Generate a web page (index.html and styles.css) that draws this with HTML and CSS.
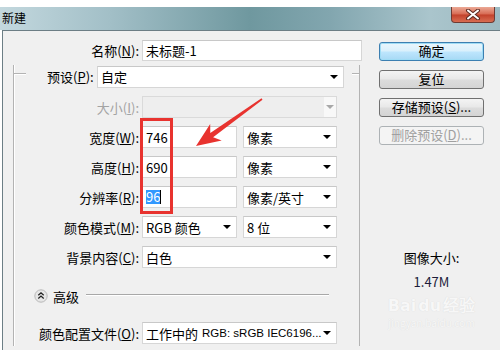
FILE: index.html
```html
<html lang="zh-CN">
<head>
  <meta charset="UTF-8">
  <title>新建</title>
  <link rel="stylesheet" href="styles.css">
</head>
<body>

  <!-- Window -->
  <div class="window">

    <!-- Title bar -->
    <div class="titlebar">
      <span class="title">新建</span>
      <div class="close">
        <svg width="16" height="11" viewBox="0 0 16 11">
          <path d="M3 1.5 L13 9.5 M13 1.5 L3 9.5" stroke="#5a2a22" stroke-width="4" stroke-linecap="round"/>
          <path d="M3 1.5 L13 9.5 M13 1.5 L3 9.5" stroke="#fff" stroke-width="2" stroke-linecap="round"/>
        </svg>
      </div>
    </div>

    <!-- Dialog body -->
    <div class="dialog">

      <div class="form">
        <div class="name-row">
          <label class="label name-label">名称(<u>N</u>):</label>
          <div class="field name-field">未标题-1</div>
        </div>

        <!-- Preset group box -->
        <div class="group">
          <div class="group-head">
            <label class="label preset-label">预设(<u>P</u>):</label>
            <div class="field select preset-select">自定<span class="arrow"></span></div>
          </div>

          <div class="rows">
            <div class="row">
              <label class="label disabled">大小(<u>I</u>):</label>
              <div class="field select wide off"><span class="arrow-box"><span class="arrow"></span></span></div>
            </div>
            <div class="row">
              <label class="label">宽度(<u>W</u>):</label>
              <div class="field half">746</div>
              <div class="field select half">像素<span class="arrow"></span></div>
            </div>
            <div class="row">
              <label class="label">高度(<u>H</u>):</label>
              <div class="field half">690</div>
              <div class="field select half">像素<span class="arrow"></span></div>
            </div>
            <div class="row">
              <label class="label">分辨率(<u>R</u>):</label>
              <div class="field half"><span class="picked">96</span><span class="caret"></span></div>
              <div class="field select half">像素/英寸<span class="arrow"></span></div>
            </div>
            <div class="row">
              <label class="label">颜色模式(<u>M</u>):</label>
              <div class="field select half">RGB 颜色<span class="arrow"></span></div>
              <div class="field select half">8 位<span class="arrow"></span></div>
            </div>
            <div class="row">
              <label class="label">背景内容(<u>C</u>):</label>
              <div class="field select wide">白色<span class="arrow"></span></div>
            </div>

            <div class="advanced">
              <svg class="toggle" width="14" height="14" viewBox="0 0 14 14">
                <circle cx="7" cy="7" r="6.2" fill="#e6e6e6" stroke="#b9b9b9"/>
                <path d="M4.3 6.2 L7 3.8 L9.7 6.2 M4.3 9.4 L7 7 L9.7 9.4" fill="none" stroke="#222" stroke-width="1.3"/>
              </svg>
              <span class="advanced-text">高级</span>
              <span class="rule"></span>
            </div>

            <div class="row profile-row">
              <label class="label">颜色配置文件(<u>O</u>):</label>
              <div class="field select wide">工作中的 <span class="latin">RGB: sRGB IEC6196...</span><span class="arrow"></span></div>
            </div>
          </div>
        </div>
      </div>

      <!-- Buttons and size -->
      <div class="side">
        <div class="button default">确定</div>
        <div class="button">复位</div>
        <div class="button">存储预设(<u>S</u>)...</div>
        <div class="button disabled">删除预设(<u>D</u>)...</div>

        <div class="size-title">图像大小:</div>
        <div class="size-value">1.47M</div>

        <div class="watermark">
          <div class="wm-logo">Bai<span class="wm-du">du</span>经验</div>
          <div class="wm-url">jingyan.baidu.com</div>
        </div>
      </div>

    </div>

    <!-- Red annotation drawn over the screenshot -->
    <svg class="marks" width="500" height="350" viewBox="0 0 500 350">
      <rect x="141.5" y="119.5" width="30" height="93" fill="none" stroke="#e8332f" stroke-width="3"/>
      <polygon points="261.5,98.3 262.5,99.7 213.1,137.2 221.7,140.5 196,146 210.2,124 210.3,133.0" fill="#e8332f"/>
    </svg>

  </div>

</body>
</html>
```

FILE: styles.css
```css
html,
body {
  margin: 0;
  background-color: #fff;
  font-family: "Noto Sans CJK SC", sans-serif;
  font-size: 13px;
  color: #000;
  overflow: hidden;
}

u {
  text-decoration-thickness: 1px;
  text-underline-offset: 1px;
}

.window {
  position: relative;
  width: 500px;
  height: 350px;
  padding-top: 7px;
  box-sizing: border-box;
}

.titlebar {
  display: flex;
  align-items: flex-start;
  justify-content: space-between;
  height: 23px;
  padding-left: 2px;
  background: linear-gradient(90deg, #c3d8de 0%, #a2bfc7 22%, #6f989f 50%, #82a6af 66%, #aac5cc 86%, #9dbac2 100%);
}

.title {
  font-size: 12px;
  line-height: 19px;
  margin-top: 1px;
}

.close {
  display: flex;
  align-items: center;
  justify-content: center;
  width: 44px;
  height: 16px;
  margin-right: 5px;
  box-sizing: border-box;
  border: 1px solid #6e3b33;
  border-top: 0;
  border-radius: 0 0 4px 4px;
  background: linear-gradient(#eba996, #d76a52 48%, #c2412a 52%, #d86d52);
}

.dialog {
  display: flex;
  height: 320px;
  margin-left: 2px;
  border-top: 1px solid #6c7e85;
  border-left: 1px solid #6c7e85;
  background-color: #f0f0f0;
}

.form {
  width: 370px;
}

.label {
  flex: none;
  text-align: right;
  white-space: nowrap;
}

.label.disabled {
  color: #a3a3a3;
}

.field {
  display: flex;
  align-items: center;
  flex: none;
  height: 22px;
  padding: 0 5px 0 3px;
  box-sizing: border-box;
  background-color: #fff;
  border: 1px solid #d6d6d6;
  border-top-color: #c8c8c8;
  white-space: nowrap;
}

.arrow {
  flex: none;
  margin-left: auto;
  width: 0;
  height: 0;
  border-left: 4px solid transparent;
  border-right: 4px solid transparent;
  border-top: 4px solid #000;
}

.latin {
  margin-left: 4px;
  font-family: "Liberation Sans", sans-serif;
  font-size: 11.5px;
}

.name-row {
  display: flex;
  align-items: center;
  gap: 3px;
  margin-top: 9px;
}

.name-label {
  width: 136px;
}

.name-field {
  width: 220px;
  height: 21px;
}

/* Group box */
.group {
  width: 347px;
  margin: 12px 0 0 10px;
  box-sizing: border-box;
  border-left: 1px solid #b3b3b3;
  border-right: 1px solid #b3b3b3;
  box-shadow: inset 1px 0 #fff;
}

.group-head {
  display: flex;
  align-items: center;
  height: 23px;
  margin-top: -8px;
}

.group-head::before,
.group-head::after {
  content: "";
  align-self: flex-start;
  height: 1px;
  margin-top: 8px;
  background-color: #b3b3b3;
  box-shadow: 0 1px #fff;
}

.group-head::before {
  width: 12px;
}

.group-head::after {
  flex: 1;
  margin-left: 8px;
}

.preset-label {
  margin-left: 21px;
  width: 46px;
}

.preset-select {
  width: 247px;
  margin-left: 4px;
}

.rows {
  margin-top: 4px;
}

.row {
  display: flex;
  align-items: center;
  gap: 6px;
  height: 30px;
}

.row .label {
  width: 125px;
  margin-right: -3px;
}

.half {
  width: 95px;
}

.half + .half {
  width: 94px;
}

.wide {
  width: 195px;
}

.select.off {
  padding-right: 0;
  background-color: #eeeeee;
  border-color: #dadada;
}

.arrow-box {
  display: flex;
  align-items: center;
  justify-content: center;
  margin-left: auto;
  width: 12px;
  height: 100%;
  background-color: #f8f8f8;
}

.arrow-box .arrow {
  margin: 0;
  border-top-color: #a8a8a8;
}

.picked {
  background-color: #3399ff;
  color: #fff;
  line-height: 14px;
}

.caret {
  width: 1px;
  height: 14px;
  background-color: #000;
}

.advanced {
  display: flex;
  align-items: center;
  height: 48px;
  padding-left: 20px;
}

.advanced-text {
  margin-left: 5px;
}

.rule {
  flex: none;
  width: 243px;
  height: 1px;
  margin: -4px 0 0 7px;
  background-color: #a8a8a8;
  box-shadow: 0 1px #fff;
}

.profile-row {
  height: 26px;
}

/* Right column */
.side {
  position: relative;
  width: 105px;
  padding: 11px 0 0 6px;
}

.button {
  height: 19px;
  margin-bottom: 9px;
  box-sizing: border-box;
  border: 1px solid #707070;
  border-radius: 3px;
  background: linear-gradient(#f4f4f4, #e8e8e8 48%, #dcdcdc 52%, #d4d4d4);
  text-align: center;
  line-height: 16px;
  white-space: nowrap;
}

.button.default {
  border-color: #3c7fb1;
  box-shadow: inset 0 0 0 1px #9fdcf5;
  background: linear-gradient(#eaf6fd, #d9f0fc 48%, #bee6fd 52%, #a7d9f5);
}

.button.disabled {
  border-color: #adb2b5;
  background: #f4f4f4;
  color: #a0a0a0;
}

.size-title {
  margin-top: 104px;
  text-align: center;
  line-height: 18px;
}

.size-value {
  margin-top: 6px;
  text-align: center;
  line-height: 18px;
  color: #1c1c3a;
}

.watermark {
  margin-top: 5px;
  text-align: center;
  color: #f7f7f7;
  text-shadow: 0 0 1px #d6d6d6;
}

.wm-logo {
  font-family: "DejaVu Sans", sans-serif;
  font-size: 16px;
  font-weight: bold;
  line-height: 19px;
}

.wm-du {
  margin: 0 2px;
}

.wm-url {
  margin-top: 2px;
  font-size: 10px;
  line-height: 12px;
}

.marks {
  position: absolute;
  left: 0;
  top: 0;
  pointer-events: none;
}
```
